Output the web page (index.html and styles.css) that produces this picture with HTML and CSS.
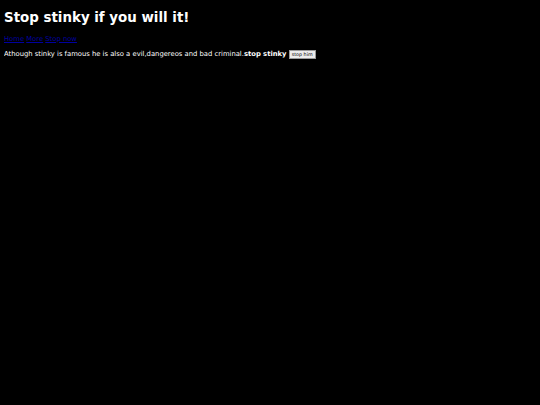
FILE: index.html
```html
<!DOCTYPE html>
<html>
<head>
<meta charset="utf-8">
<link rel="stylesheet" href="styles.css">
</head>
<body>
<h1 class="title">Stop stinky if you will it!</h1>
<nav class="nav"><a href="#">Home</a> <a href="#">More</a> <a href="#">Stop now</a></nav>
<p class="text">Athough stinky is famous he is also a evil,dangereos and bad criminal.<b>stop stinky</b> <button class="btn">stop him</button></p>
</body>
</html>
```
FILE: styles.css
```css
html, body { background: #000; }
body {
  margin: 4px;
  color: #fff;
  font-family: "DejaVu Sans", sans-serif;
}
.title {
  font-size: 13.4px;
  font-weight: bold;
  margin: 5.5px 0 0;
}
.nav {
  font-size: 6.8px;
  margin-top: 10px;
}
.nav a { color: #0000a0; }
.text {
  font-size: 6.8px;
  margin: 7.5px 0 0;
}
.btn {
  font-family: "DejaVu Sans", sans-serif;
  font-size: 4.8px;
  padding: 1px 2px;
  color: #000;
  background: #ececec;
  border: 1px solid #999;
  border-radius: 0;
  vertical-align: baseline;
}
```
